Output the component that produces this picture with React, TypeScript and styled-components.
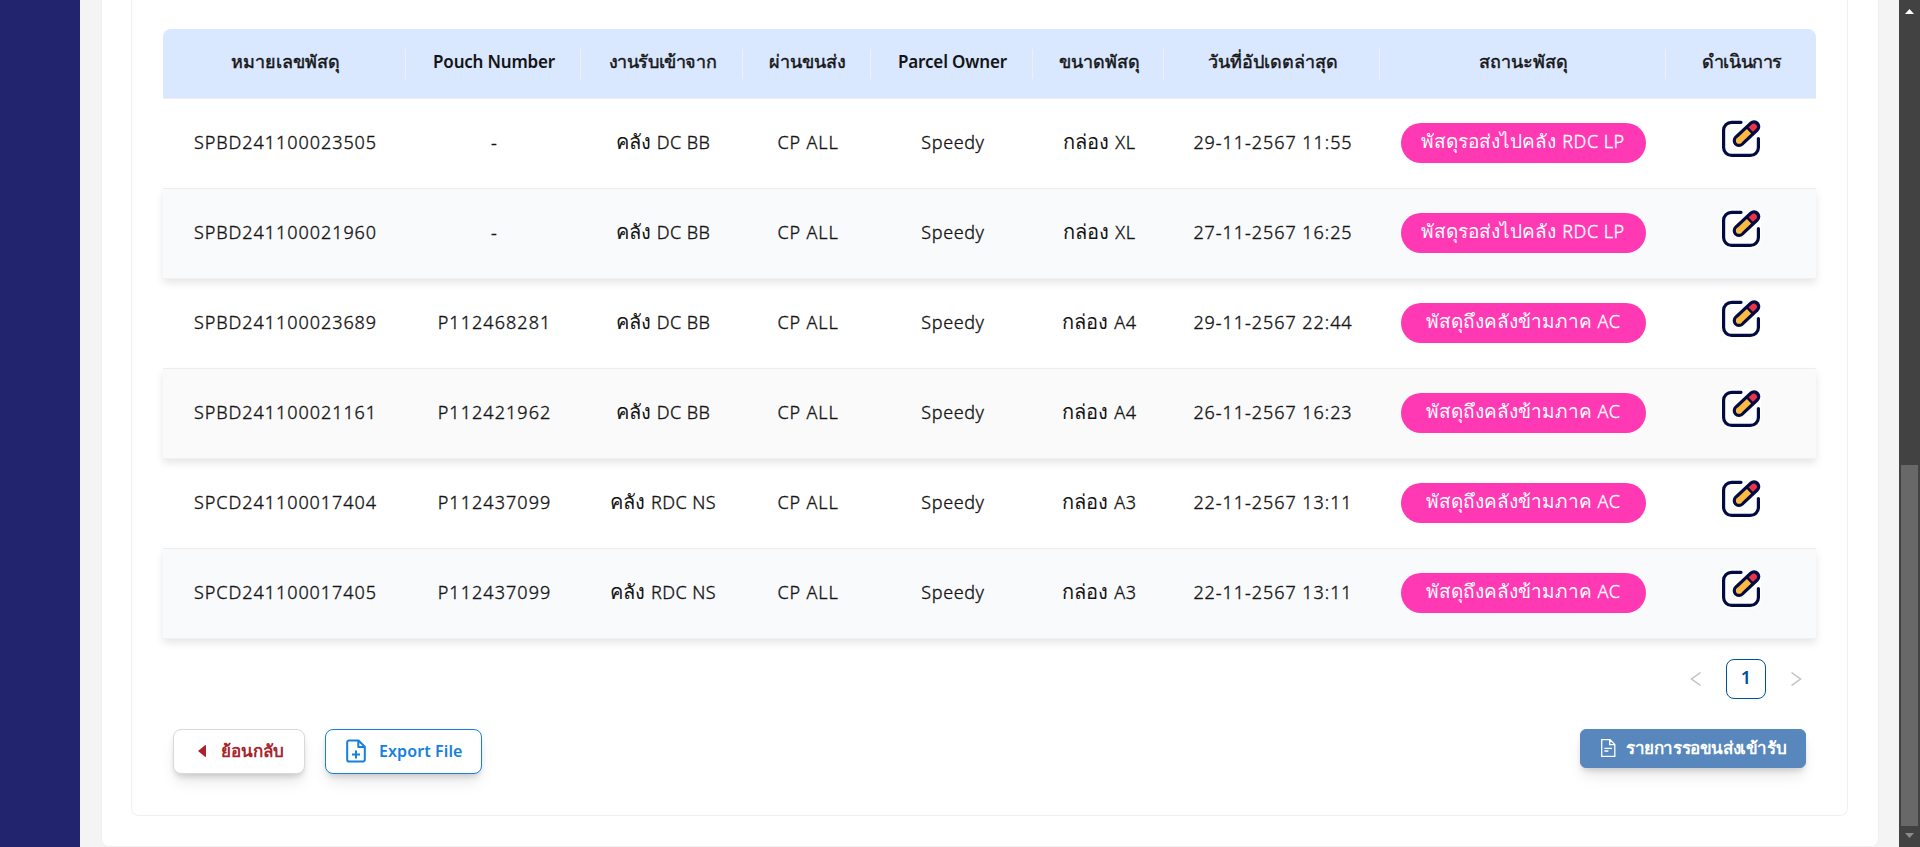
import React from 'react';
import styled, { createGlobalStyle } from 'styled-components';

const GlobalStyle = createGlobalStyle`
  *, *::before, *::after { box-sizing: border-box; }
  body {
    margin: 0;
    background: #f5f5f5;
    color: #141414;
    font-family: "Noto Sans", "Open Sans", sans-serif;
    overflow: hidden;
  }
  button { font-family: inherit; cursor: pointer; }
`;

const Page = styled.div`
  display: flex;
  height: 847px;
  width: 100%;
`;

const Sidebar = styled.aside`
  flex: 0 0 80px;
  background: #22256e;
`;

const Main = styled.main`
  flex: 1;
  display: flex;
  padding: 0 20px 0 21px;
  background: #f4f4f4;
`;

const OuterCard = styled.section`
  flex: 1;
  height: 847px;
  padding: 0 30px 30px 29px;
  background: #fff;
  border: 1px solid #f0f0f0;
  border-top: 0;
  border-radius: 0 0 8px 8px;
`;

const InnerCard = styled.section`
  display: flex;
  flex-direction: column;
  height: 816px;
  padding: 29px 31px 0;
  border: 1px solid #f0f0f0;
  border-top: 0;
  border-radius: 0 0 8px 8px;
`;

const Table = styled.div`
  display: flex;
  flex-direction: column;
`;

const columns = '243px 175px 162px 128px 162px 131px 216px 286px 150px';

const HeadRow = styled.div`
  display: grid;
  grid-template-columns: ${columns};
  height: 70px;
  align-items: center;
  background: #d9e7ff;
  border-bottom: 1px solid #f0f0f0;
  border-radius: 8px 8px 0 0;
`;

const HeadCell = styled.div<{ $track: number; $latin?: boolean }>`
  display: flex;
  align-items: center;
  justify-content: center;
  height: 30px;
  padding: 0 0 5px 2px;
  border-right: 1px solid #f0f0f0;
  font-size: ${(p) => (p.$latin ? 17 : 18)}px;
  font-weight: ${(p) => (p.$latin ? 600 : 400)};
  -webkit-text-stroke: ${(p) => (p.$latin ? '0' : '0.45px')} currentColor;
  letter-spacing: ${(p) => p.$track}px;
  white-space: nowrap;
  &:last-child { border-right: 0; }
`;

const Row = styled.div<{ $tone?: string }>`
  display: grid;
  grid-template-columns: ${columns};
  height: 90px;
  align-items: center;
  background: ${(p) => p.$tone ?? 'transparent'};
  border-bottom: 1px solid #f0f0f0;
  box-shadow: ${(p) => (p.$tone ? '0 4px 8px rgba(0,0,0,.1)' : 'none')};
`;

const Cell = styled.div<{ $track?: number }>`
  display: flex;
  justify-content: center;
  align-items: baseline;
  gap: 6px;
  padding: 0 0 4px 2px;
  font-size: 18px;
  line-height: 28px;
  font-weight: 300;
  -webkit-text-stroke: 0.35px currentColor;
  letter-spacing: ${(p) => p.$track ?? 0}px;
  white-space: nowrap;
`;

const Thai = styled.span<{ $size: number }>`
  font-size: ${(p) => p.$size}px;
  letter-spacing: 0;
  -webkit-text-stroke: 0;
`;

const BadgeCell = styled.div`
  display: flex;
  justify-content: center;
`;

const Badge = styled.span`
  display: flex;
  align-items: baseline;
  justify-content: center;
  gap: 6px;
  width: 245px;
  height: 40px;
  margin-bottom: 2px;
  border-radius: 20px;
  background: #ff38b4;
  color: #fff;
  font-size: 18px;
  line-height: 36px;
  font-weight: 300;
  -webkit-text-stroke: 0.35px currentColor;
  letter-spacing: 0.5px;
  white-space: nowrap;
`;

const ActionCell = styled.div`
  display: flex;
  justify-content: center;
  padding-bottom: 9px;
`;

const EditButton = styled.button`
  display: flex;
  width: 40px;
  height: 40px;
  padding: 0;
  border: 0;
  border-radius: 9px;
  background: #fff;
`;

const Pagination = styled.nav`
  display: flex;
  justify-content: flex-end;
  gap: 10px;
  margin-top: 20px;
  height: 40px;
`;

const PageArrow = styled.button`
  display: flex;
  align-items: center;
  justify-content: center;
  width: 40px;
  padding: 0;
  border: 0;
  background: none;
`;

const PageNumber = styled.button`
  width: 40px;
  height: 40px;
  padding: 0 0 4px;
  border: 1px solid #00529b;
  border-radius: 8px;
  background: #fff;
  color: #00529b;
  font-size: 18px;
  font-weight: 600;
`;

const Footer = styled.footer`
  display: flex;
  align-items: flex-start;
  justify-content: space-between;
  margin-top: 30px;
  padding: 0 10px;
`;

const ButtonGroup = styled.div`
  display: flex;
  gap: 20px;
`;

const Button = styled.button<{ $kind: 'back' | 'export' | 'primary' }>`
  display: flex;
  align-items: center;
  height: ${(p) => (p.$kind === 'primary' ? 39 : 45)}px;
  width: ${(p) => ({ back: 132, export: 157, primary: 226 })[p.$kind]}px;
  padding: ${(p) => ({ back: '0 0 2px 24px', export: '0 0 1px 20px', primary: '0 0 2px 20px' })[p.$kind]};
  border: 1px solid ${(p) => ({ back: '#d9d9d9', export: '#1480e0', primary: '#5787bc' })[p.$kind]};
  border-radius: ${(p) => (p.$kind === 'primary' ? 6 : 8)}px;
  background: ${(p) => (p.$kind === 'primary' ? '#5787bc' : '#fff')};
  color: ${(p) => ({ back: '#a8252d', export: '#1480e0', primary: '#fff' })[p.$kind]};
  box-shadow: 0 10px 15px -3px rgba(0,0,0,.1), 0 4px 6px -2px rgba(0,0,0,.16);
  font-size: 16px;
  font-weight: 600;
  white-space: nowrap;
`;

const Label = styled.span<{ $gap: number; $track: number; $size?: number }>`
  margin-left: ${(p) => p.$gap}px;
  font-size: ${(p) => p.$size ?? 16}px;
  letter-spacing: ${(p) => p.$track}px;
`;

const ScrollTrack = styled.div`
  flex: 0 0 21px;
  display: flex;
  flex-direction: column;
  align-items: center;
  background: #424242;
`;

const ScrollThumb = styled.div`
  width: 17px;
  height: 361px;
  margin: auto 1px 0 0;
  background: #686868;
`;

const ScrollArrow = styled.svg`
  display: block;
  width: 21px;
  height: 21px;
`;

const EditIcon = () => (
  <svg width="40" height="40" viewBox="0 0 40 40" fill="none" strokeLinejoin="round">
    <path d="M20 3.300H10.600a8 8 0 0 0-8 8v17.100a8 8 0 0 0 8 8h18.800a8 8 0 0 0 8-8V19.600" stroke="#030b43" strokeWidth="3.200" strokeLinecap="round" />
    <path d="M18 21.700 33 7.600" stroke="#030b43" strokeWidth="12.600" strokeLinecap="round" />
    <path d="M28 12.300 32.800 7.800" stroke="#ea3546" strokeWidth="6.200" strokeLinecap="round" />
    <path d="M18 21.700 27 13.250" stroke="#030b43" strokeWidth="8" />
    <path d="m26.500 13.710 3.300-3.100" stroke="#030b43" strokeWidth="8" />
    <path d="M18 21.700 28 12.300" stroke="#fdb940" strokeWidth="6.200" />
    <circle cx="18" cy="21.700" r="3.100" fill="#fdb940" />
  </svg>
);

const Chevron = ({ right }: { right?: boolean }) => (
  <svg width="12" height="16" viewBox="0 0 12 16" fill="none" stroke="#bfbfbf" strokeWidth="1.500">
    <path d={right ? 'M1.5 1.5 10.5 8l-9 6.5' : 'M10.5 1.5 1.5 8l9 6.5'} />
  </svg>
);

const CaretLeft = () => (
  <svg width="8" height="12" viewBox="0 0 8 12" fill="#a8252d">
    <path d="M7 .2.6 5.400a.8.8 0 0 0 0 1.200L7 11.800c.4.3 1 0 1-.5V.7C8 .2 7.400-.1 7 .2z" />
  </svg>
);

const FilePlus = () => (
  <svg width="20" height="24" viewBox="0 0 20 24" fill="none" stroke="#1480e0" strokeWidth="2" strokeLinejoin="round">
    <path d="M12.500 1.500H3A1.800 1.800 0 0 0 1.200 3.300v17.400A1.800 1.800 0 0 0 3 22.500h14a1.800 1.800 0 0 0 1.800-1.800V7.800z" />
    <path d="M12.300 1.800v6.200h6.200M10 11.500v8M6 15.500h8" />
  </svg>
);

const FileText = () => (
  <svg width="15" height="18" viewBox="0 0 15 18" fill="none" stroke="#fff" strokeWidth="1.300">
    <path d="M9 .7H.7v16.600h13.100V5.400zM8.700.9v4.700h4.900M3.400 9.300h7.600M3.400 12h4" />
  </svg>
);

const headers: { text: string; track: number; latin?: boolean }[] = [
  { text: 'หมายเลขพัสดุ', track: 0 },
  { text: 'Pouch Number', track: -0.2, latin: true },
  { text: 'งานรับเข้าจาก', track: -0.4 },
  { text: 'ผ่านขนส่ง', track: 0 },
  { text: 'Parcel Owner', track: -0.15, latin: true },
  { text: 'ขนาดพัสดุ', track: 0 },
  { text: 'วันที่อัปเดตล่าสุด', track: 0 },
  { text: 'สถานะพัสดุ', track: 0 },
  { text: 'ดำเนินการ', track: -0.4 },
];

const waiting = { thai: 'พัสดุรอส่งไปคลัง', code: 'RDC LP' };
const arrived = { thai: 'พัสดุถึงคลังข้ามภาค', code: 'AC' };

const rows = [
  { id: 'SPBD241100023505', pouch: '-', from: 'DC BB', size: 'XL', date: '29-11-2567 11:55', status: waiting },
  { id: 'SPBD241100021960', pouch: '-', from: 'DC BB', size: 'XL', date: '27-11-2567 16:25', status: waiting, tone: '#f9fafc' },
  { id: 'SPBD241100023689', pouch: 'P112468281', from: 'DC BB', size: 'A4', date: '29-11-2567 22:44', status: arrived },
  { id: 'SPBD241100021161', pouch: 'P112421962', from: 'DC BB', size: 'A4', date: '26-11-2567 16:23', status: arrived, tone: '#fafafa' },
  { id: 'SPCD241100017404', pouch: 'P112437099', from: 'RDC NS', size: 'A3', date: '22-11-2567 13:11', status: arrived },
  { id: 'SPCD241100017405', pouch: 'P112437099', from: 'RDC NS', size: 'A3', date: '22-11-2567 13:11', status: arrived, tone: '#f9fafc' },
];

export default function App() {
  return (
    <>
      <GlobalStyle />
      <Page>
        <Sidebar />
        <Main>
          <OuterCard>
            <InnerCard>
              <Table>
                <HeadRow>
                  {headers.map((h) => (
                    <HeadCell key={h.text} $track={h.track} $latin={h.latin}>{h.text}</HeadCell>
                  ))}
                </HeadRow>
                {rows.map((r) => (
                  <Row key={r.id} $tone={r.tone}>
                    <Cell $track={0.95}>{r.id}</Cell>
                    <Cell $track={1.05}>{r.pouch}</Cell>
                    <Cell $track={0.4}><Thai $size={20}>คลัง</Thai> {r.from}</Cell>
                    <Cell $track={0.85}>CP ALL</Cell>
                    <Cell $track={0.6}>Speedy</Cell>
                    <Cell $track={0.6}><Thai $size={20}>กล่อง</Thai> {r.size}</Cell>
                    <Cell $track={0.95}>{r.date}</Cell>
                    <BadgeCell>
                      <Badge><Thai $size={19}>{r.status.thai}</Thai> {r.status.code}</Badge>
                    </BadgeCell>
                    <ActionCell><EditButton aria-label="แก้ไข"><EditIcon /></EditButton></ActionCell>
                  </Row>
                ))}
              </Table>
              <Pagination>
                <PageArrow><Chevron /></PageArrow>
                <PageNumber>1</PageNumber>
                <PageArrow><Chevron right /></PageArrow>
              </Pagination>
              <Footer>
                <ButtonGroup>
                  <Button $kind="back"><CaretLeft /><Label $gap={15} $track={0} $size={17}>ย้อนกลับ</Label></Button>
                  <Button $kind="export"><FilePlus /><Label $gap={13} $track={0.1}>Export File</Label></Button>
                </ButtonGroup>
                <Button $kind="primary"><FileText /><Label $gap={10} $track={-0.4} $size={17}>รายการรอขนส่งเข้ารับ</Label></Button>
              </Footer>
            </InnerCard>
          </OuterCard>
        </Main>
        <ScrollTrack>
          <ScrollArrow viewBox="0 0 21 21"><path d="M10.500 9 15 14H6z" fill="#fff" /></ScrollArrow>
          <ScrollThumb />
          <ScrollArrow viewBox="0 0 21 21"><path d="M10.500 12 15 7H6z" fill="#8b8b8b" /></ScrollArrow>
        </ScrollTrack>
      </Page>
    </>
  );
}
